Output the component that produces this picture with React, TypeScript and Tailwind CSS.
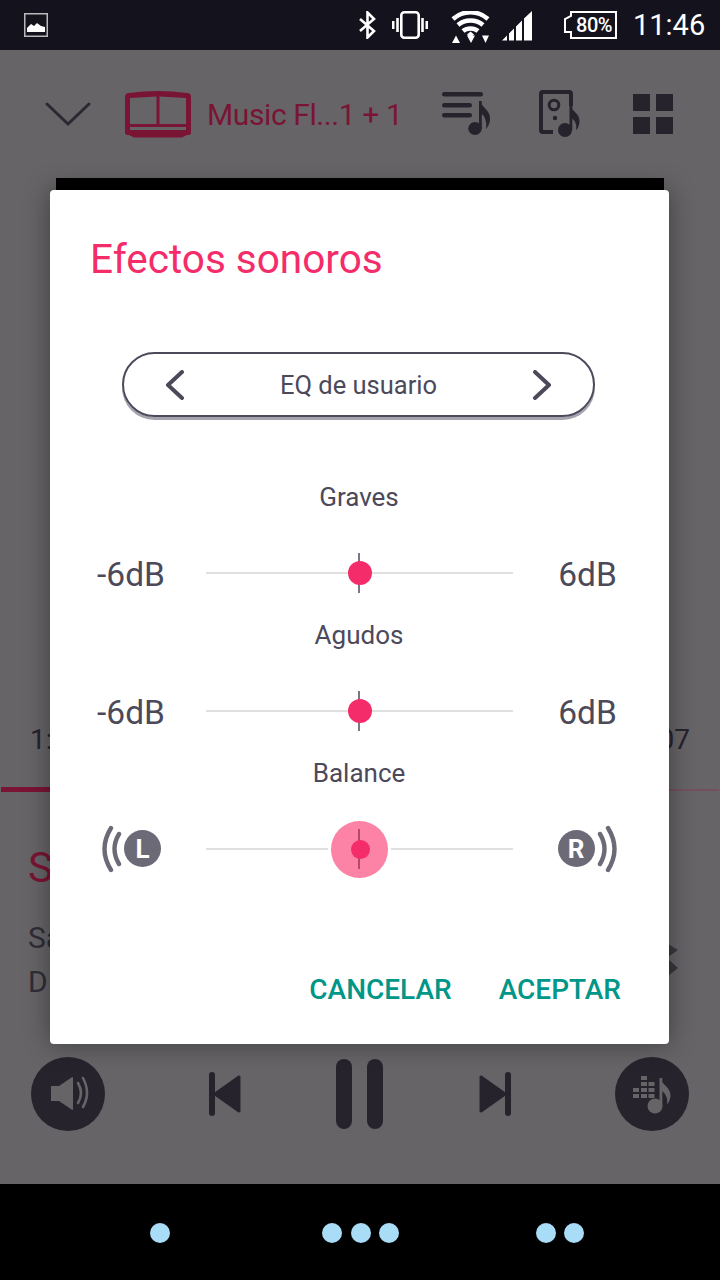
import React from "react";

const TEXT = "text-[#4c495b]";

function StatusBar() {
  return (
    <div className="flex h-[50px] items-center bg-[#14121c] text-white">
      <svg className="ml-[24px] h-[24px] w-[24px]" viewBox="0 0 24 24">
        <rect x="0.75" y="0.75" width="22.5" height="22.5" fill="#14121c" stroke="#b9b9bd" strokeWidth="1.5" />
        <path d="M3 19V15L7 11L10 13L13 10L17 13L21 14V19Z" fill="#fff" />
      </svg>
      <svg className="ml-[310px] h-[28px] w-[19px]" viewBox="0 0 19 28" fill="none" stroke="#fff" strokeWidth="2.6">
        <path d="M2 8L16 20L9.5 26.5V1.5L16 8L2 20" />
      </svg>
      <svg className="ml-[15px] h-[28px] w-[36px]" viewBox="0 0 36 28" fill="#fff">
        <rect x="9.3" y="1.3" width="17.4" height="25.4" rx="3" fill="none" stroke="#fff" strokeWidth="2.6" />
        <rect x="0" y="10" width="2.5" height="8" />
        <rect x="4.2" y="7" width="2.6" height="14" />
        <rect x="29.2" y="7" width="2.6" height="14" />
        <rect x="33.5" y="10" width="2.5" height="8" />
      </svg>
      <svg className="ml-[23px] mt-[4px] h-[32px] w-[39px]" viewBox="0 0 39 32" fill="none">
        <path d="M2 8C12 -1 27 -1 37 8" stroke="#fff" strokeWidth="4.5" />
        <path d="M7 14C14 8 25 8 32 14" stroke="#fff" strokeWidth="4.5" />
        <path d="M12 20C16 16.5 23 16.5 27 20" stroke="#fff" strokeWidth="4.5" />
        <path d="M16 23.5L19.5 20.5L23 23.5L19.5 27Z" fill="#fff" />
        <path d="M1 32L5 24.5L9 32ZM16 24.5H24L20 32ZM31 24.5H38L34.5 32Z" fill="#fff" />
      </svg>
      <svg className="ml-[12px] mt-[2px] h-[30px] w-[30px]" viewBox="0 0 30 30" fill="#fff">
        <path d="M0 29.5L5 24.5V29.5ZM7 22.5L12 17.5V29.5H7ZM14 15.5L20 9.5V29.5H14ZM22 7.5L30 0V29.5H22Z" />
      </svg>
      <div className="relative ml-[31px] flex h-[28px] w-[54px] items-center justify-center pl-[8px]">
        <svg className="absolute inset-0 h-[28px] w-[54px]" viewBox="0 0 54 28" fill="none" stroke="#fff" strokeWidth="2">
          <path d="M8 1H53V27H8V21H2V8L8 5Z" />
        </svg>
        <span className="relative text-[20px] font-medium leading-none tracking-[-0.5px]">80%</span>
      </div>
      <span className="ml-[16px] text-[29px] leading-none">11:46</span>
    </div>
  );
}

function AppBar() {
  return (
    <div className="flex h-[128px] items-center bg-[#666467]">
      <svg className="ml-[45px] h-[26px] w-[46px]" viewBox="0 0 46 26" fill="none" stroke="#2a2830" strokeWidth="3" strokeLinecap="round">
        <path d="M2 3L23 23L44 3" />
      </svg>
      <svg className="ml-[34px] h-[48px] w-[66px]" viewBox="0 0 66 48" fill="#7a1434">
        <path
          fillRule="evenodd"
          d="M4 3Q33 -1 62 3Q66 3 66 7V43Q66 45 62 45L57 47.5H9L4 45Q0 45 0 43V7Q0 3 4 3ZM5 8V34H31.5V6.5ZM34.5 6.5V34H61V8ZM5 37V40H61V37Z"
        />
      </svg>
      <span className="ml-[16px] mt-[2px] w-[200px] whitespace-nowrap text-[30px] leading-none tracking-[-0.4px] text-[#7a1434]">Music Fl...1 + 1</span>
      <svg className="ml-[34px] h-[46px] w-[50px]" viewBox="0 0 50 46" fill="#26232d">
        <rect x="1" y="1" width="41" height="4.6" rx="2.3" />
        <rect x="1" y="12" width="30" height="4.6" rx="2.3" />
        <rect x="1" y="22" width="30" height="4.6" rx="2.3" />
        <ellipse cx="34" cy="37.5" rx="6.8" ry="6.5" />
        <rect x="38" y="10" width="2.8" height="28" />
        <path d="M39 10C41 17 50 19 49 29C48.5 33 47 36 45 38C46 31 44 24 39 22Z" />
      </svg>
      <svg className="ml-[47px] h-[50px] w-[44px]" viewBox="0 0 44 50" fill="#26232d">
        <path d="M33 17V5Q33 3 31 3H5Q3 3 3 5V41Q3 43 5 43H15" fill="none" stroke="#26232d" strokeWidth="4" />
        <circle cx="16" cy="16" r="4.8" fill="none" stroke="#26232d" strokeWidth="3" />
        <circle cx="17" cy="29" r="2.2" />
        <ellipse cx="27" cy="41" rx="7" ry="7" />
        <rect x="31.5" y="16" width="2.8" height="25" />
        <path d="M32 16C34 23 42 24 41.5 33C41 37 39.5 40 38 41C39 35 37 31 32 28Z" />
      </svg>
      <div className="ml-[51px] grid w-[40px] grid-cols-2 gap-[6px]">
        <div className="h-[17px] bg-[#26232d]" />
        <div className="h-[17px] bg-[#26232d]" />
        <div className="h-[17px] bg-[#26232d]" />
        <div className="h-[17px] bg-[#26232d]" />
      </div>
    </div>
  );
}

function Player() {
  return (
    <div className="flex flex-1 flex-col bg-[#666467]">
      <div className="mx-[56px] h-[532px] shrink-0 bg-black" />
      <div className="flex h-[60px] items-center justify-between pl-[30px] pr-[30px] text-[28px] text-[#26232d]">
        <span>1:</span>
        <span>07</span>
      </div>
      <div className="mt-[17px] flex h-[5px] items-center px-[1px]">
        <div className="h-[5px] w-[200px] bg-[#7a1434]" />
        <div className="h-[2px] flex-1 bg-[#74505f]" />
      </div>
      <div className="mt-[51px] h-[50px] pl-[28px] text-[42px] leading-[50px] text-[#7a1434]">S</div>
      <div className="mt-[25px] flex h-[40px] justify-between pl-[28px] pr-[42px] text-[30px] leading-[40px] text-[#2f2d36]">
        <span>Sa</span>
        <svg className="mt-[25px] h-[34px] w-[20px]" viewBox="0 0 20 34" fill="#3a3840">
          <path d="M10 1L20 7L10 14ZM10 16L20 25L10 33Z" />
        </svg>
      </div>
      <div className="mt-[4px] h-[40px] pl-[28px] text-[30px] leading-[40px] text-[#2f2d36]">D</div>
      <div className="mt-[55px] flex h-[74px] items-center pl-[31px]">
        <div className="h-[74px] w-[74px] rounded-full bg-[#26232d]">
          <svg className="h-[74px] w-[74px]" viewBox="0 0 74 74" fill="#666467">
            <path d="M20 29H28L40.5 20.5Q42 19.5 42 21V52Q42 53.5 40.5 52.5L28 44H20Z" />
            <path d="M47 26Q53 36 47 46M52 21Q60 36 52 50" fill="none" stroke="#666467" strokeWidth="2.6" strokeLinecap="round" />
          </svg>
        </div>
        <svg className="ml-[104px] h-[44px] w-[32px]" viewBox="0 0 32 44" fill="#26232d">
          <rect x="0" y="0" width="6" height="44" rx="3" />
          <path d="M30 5L6 22L30 39Z" stroke="#26232d" strokeWidth="3" strokeLinejoin="round" />
        </svg>
        <div className="ml-[95px] flex h-[70px] gap-[15px]">
          <div className="w-[16px] rounded-full bg-[#26232d]" />
          <div className="w-[16px] rounded-full bg-[#26232d]" />
        </div>
        <svg className="ml-[96px] h-[44px] w-[32px]" viewBox="0 0 32 44" fill="#26232d">
          <rect x="26" y="0" width="6" height="44" rx="3" />
          <path d="M2 5L26 22L2 39Z" stroke="#26232d" strokeWidth="3" strokeLinejoin="round" />
        </svg>
        <div className="ml-[104px] h-[74px] w-[74px] rounded-full bg-[#26232d]">
          <svg className="h-[74px] w-[74px]" viewBox="0 0 74 74" fill="#666467">
            <path d="M26 19H32V23H26ZM26 25H32V29H26ZM33.5 25H39.5V29H33.5ZM18 31H24V35H18ZM26 31H32V35H26ZM33.5 31H39.5V35H33.5ZM18 37H24V41H18ZM26 37H32V41H26ZM33.5 37H39.5V41H33.5Z" />
            <ellipse cx="40" cy="49" rx="7.5" ry="7.5" />
            <rect x="44.5" y="21" width="2.8" height="28" />
            <path d="M45 21C47 28 56 30 55.5 39C55 43 53.5 46 52 47C53 41 51 36 45 33Z" />
          </svg>
        </div>
      </div>
    </div>
  );
}

function NavBar() {
  const dot = "h-[20px] w-[20px] rounded-full bg-[#a8dcf7]";
  return (
    <div className="flex h-[96px] items-center bg-black pt-[1px]">
      <div className={`ml-[150px] ${dot}`} />
      <div className="ml-[152px] flex gap-[8.5px]">
        <div className={dot} />
        <div className={dot} />
        <div className={dot} />
      </div>
      <div className="ml-[137px] flex gap-[8px]">
        <div className={dot} />
        <div className={dot} />
      </div>
    </div>
  );
}

function Slider({ active }: { active?: boolean }) {
  return (
    <div className="relative flex h-[58px] w-[307px] items-center justify-center">
      <div className="absolute left-0 right-0 top-[28px] h-[2px] bg-[#e0e0e0]" />
      {active && <div className="absolute left-[125px] top-[0.5px] h-[57px] w-[57px] rounded-full bg-[#fc82a6] shadow-[0_0_0_3px_#fff]" />}
      <div className={`absolute left-[152px] top-[9px] h-[40px] w-[2px] ${active ? "bg-[#b34a6c]" : "bg-[#7b7785]"}`} />
      <div
        className={`absolute rounded-full bg-[#f42c6a] ${
          active ? "left-[144.5px] top-[19.5px] h-[19px] w-[19px]" : "left-[142px] top-[17px] h-[24px] w-[24px]"
        }`}
      />
    </div>
  );
}

function Band({ label, left, right, active }: { label: string; left: React.ReactNode; right: React.ReactNode; active?: boolean }) {
  return (
    <div className="h-[138px]">
      <div className={`h-[36px] text-center text-[26px] leading-[36px] ${TEXT} pr-[1px]`}>{label}</div>
      <div className={`mt-[14px] flex h-[88px] items-center ${TEXT}`}>
        <div className={`flex w-[156px] justify-center pl-[6px] text-[33.5px] ${active ? "" : "pt-[4px]"}`}>{left}</div>
        <Slider active={active} />
        <div className={`flex w-[156px] justify-center pr-[7px] text-[33.5px] ${active ? "" : "pt-[4px]"}`}>{right}</div>
      </div>
    </div>
  );
}

function Channel({ letter }: { letter: "L" | "R" }) {
  const isLeft = letter === "L";
  return (
    <div className={`-mt-[1px] flex items-center ${isLeft ? "" : "flex-row-reverse"}`}>
      <svg className={`h-[48px] w-[23px] ${isLeft ? "" : "-scale-x-100"}`} viewBox="0 0 23 48" fill="none" stroke="#6d6a78" strokeWidth="4.4" strokeLinecap="round">
        <path d="M10 3Q-3 24 10 45M18 9Q9 24 18 39" />
      </svg>
      <div className="flex h-[37px] w-[37px] items-center justify-center rounded-full bg-[#6d6a78] text-[26px] font-bold leading-none text-white">{letter}</div>
    </div>
  );
}

function SoundDialog() {
  return (
    <div className="absolute left-[50px] top-[190px] h-[854px] w-[619px] rounded-[4px] bg-white shadow-[0_0_26px_rgba(0,0,0,0.4)]">
      <div className="ml-[40px] mt-[47px] h-[44px] text-[40.5px] leading-[44px] text-[#f42c6a]">Efectos sonoros</div>
      <div className="ml-[72px] mr-[74px] mt-[71px] flex h-[65px] items-center justify-between rounded-full border-2 border-[#4c495b] px-[41px] shadow-[0_3px_0_#a5a3ad]">
        <svg className="h-[30px] w-[20px]" viewBox="0 0 20 30" fill="none" stroke="#4c495b" strokeWidth="4" strokeLinecap="round" strokeLinejoin="round">
          <path d="M17 2L3 15L17 28" />
        </svg>
        <span className={`pt-[1px] text-[25.5px] ${TEXT}`}>EQ de usuario</span>
        <svg className="h-[30px] w-[20px]" viewBox="0 0 20 30" fill="none" stroke="#4c495b" strokeWidth="4" strokeLinecap="round" strokeLinejoin="round">
          <path d="M3 2L17 15L3 28" />
        </svg>
      </div>
      <div className="mt-[62px]">
        <Band label="Graves" left="-6dB" right="6dB" />
        <Band label="Agudos" left="-6dB" right="6dB" />
        <Band label="Balance" left={<Channel letter="L" />} right={<Channel letter="R" />} active />
      </div>
      <div className="mt-[73px] flex h-[48px] items-center justify-end gap-[47px] pr-[48px] text-[28px] font-medium text-[#009688]">
        <span>CANCELAR</span>
        <span>ACEPTAR</span>
      </div>
    </div>
  );
}

export default function App() {
  return (
    <div className="relative flex h-[1280px] w-[720px] flex-col overflow-hidden font-['Roboto',sans-serif]">
      <StatusBar />
      <AppBar />
      <Player />
      <NavBar />
      <SoundDialog />
    </div>
  );
}
